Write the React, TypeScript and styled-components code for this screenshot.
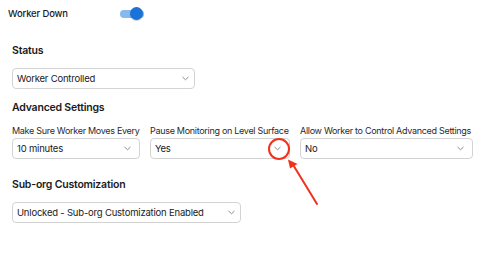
import styled, { createGlobalStyle } from 'styled-components';

const GlobalStyle = createGlobalStyle`
  html, body {
    margin: 0;
    padding: 0;
    background: #ffffff;
  }
  body {
    font-family: Inter, "Noto Sans", "Liberation Sans", sans-serif;
    color: #1a1a1c;
  }
  * {
    box-sizing: border-box;
  }
`;

const ChevronDown = () => (
  <svg width="7" height="5" viewBox="0 0 7 5" fill="none">
    <path d="M0.8 1.2 L3.5 3.8 L6.2 1.2" stroke="#8a8a8a" strokeWidth="1" strokeLinecap="round" strokeLinejoin="round" />
  </svg>
);

const Select = ({ value, width, pad = 8 }: { value: string; width?: number; pad?: number }) => (
  <SelectBox $width={width} $pad={pad}>
    <span>{value}</span>
    <ChevronDown />
  </SelectBox>
);

const ADVANCED_FIELDS = [
  { label: 'Make Sure Worker Moves Every', value: '10 minutes', width: 128 },
  { label: 'Pause Monitoring on Level Surface', value: 'Yes', width: 140 },
  { label: 'Allow Worker to Control Advanced Settings', value: 'No', width: 173 },
];

const App = () => {
  return (
    <Page>
      <GlobalStyle />
      <TopRow>
        <span className="title">Worker Down</span>
        <Toggle>
          <span className="track" />
          <span className="knob" />
        </Toggle>
      </TopRow>

      <Section $top={15}>
        <Heading>Status</Heading>
        <Select value="Worker Controlled" width={183} pad={5} />
      </Section>

      <Section $top={10}>
        <Heading>Advanced Settings</Heading>
        <FieldRow>
          {ADVANCED_FIELDS.map(field => (
            <Field key={field.label} $width={field.width}>
              <Label>{field.label}</Label>
              <Select value={field.value} />
            </Field>
          ))}
        </FieldRow>
      </Section>

      <Section $top={17}>
        <Heading>Sub-org Customization</Heading>
        <Select value="Unlocked - Sub-org Customization Enabled" width={229} pad={5} />
      </Section>

      <Annotation width="489" height="275" viewBox="0 0 489 275">
        <circle cx="279" cy="149" r="10" stroke="#f0321c" strokeWidth="2" fill="none" />
        <line x1="317" y1="204" x2="292" y2="163" stroke="#f0321c" strokeWidth="2" strokeLinecap="round" />
        <path d="M288 159.5 L297.5 164 L290 168.5 Z" fill="#f0321c" />
      </Annotation>
    </Page>
  );
};

export default App;

const Page = styled.div`
  position: relative;
  width: 489px;
  height: 275px;
  overflow: hidden;
`;

const TopRow = styled.div`
  display: flex;
  align-items: center;
  height: 27px;
  margin-bottom: 1px;
  padding-left: 8px;

  .title {
    width: 112px;
    font-size: 9.5px;
    letter-spacing: -0.15px;
    font-weight: 500;
  }
`;

const Toggle = styled.div`
  position: relative;
  width: 26px;
  height: 14px;

  .track {
    position: absolute;
    left: 0;
    top: 3px;
    width: 24px;
    height: 8px;
    border-radius: 4px;
    background-color: #86b9ee;
  }

  .knob {
    position: absolute;
    left: 10px;
    top: 0;
    width: 13px;
    height: 13px;
    border-radius: 50%;
    background-color: #1a73d9;
    box-shadow: 0 1px 1px rgba(0, 0, 0, 0.2);
  }
`;

const Section = styled.section<{ $top: number }>`
  display: flex;
  flex-direction: column;
  align-items: flex-start;
  margin-top: ${p => p.$top}px;
  padding-left: 12px;
`;

const Heading = styled.h3`
  margin: 0 0 8px;
  font-size: 10.5px;
  letter-spacing: -0.2px;
  line-height: 18px;
  font-weight: 600;
`;

const FieldRow = styled.div`
  display: flex;
  gap: 10px;
`;

const Field = styled.div<{ $width: number }>`
  display: flex;
  flex-direction: column;
  gap: 1px;
  width: ${p => p.$width}px;
`;

const Label = styled.label`
  font-size: 9px;
  letter-spacing: -0.3px;
  line-height: 12px;
  color: #2a2a2a;
  white-space: nowrap;
`;

const SelectBox = styled.div<{ $width?: number; $pad: number }>`
  display: flex;
  align-items: center;
  justify-content: space-between;
  width: ${p => (p.$width ? `${p.$width}px` : '100%')};
  height: 21px;
  padding: 0 ${p => p.$pad}px 0 4px;
  border: 1px solid #d3d3d3;
  border-radius: 4px;
  background-color: #ffffff;
  font-size: 9.5px;
  letter-spacing: -0.2px;
  color: #1a1a1c;

  span {
    white-space: nowrap;
  }
`;

const Annotation = styled.svg`
  position: absolute;
  left: 0;
  top: 0;
  pointer-events: none;
`;
